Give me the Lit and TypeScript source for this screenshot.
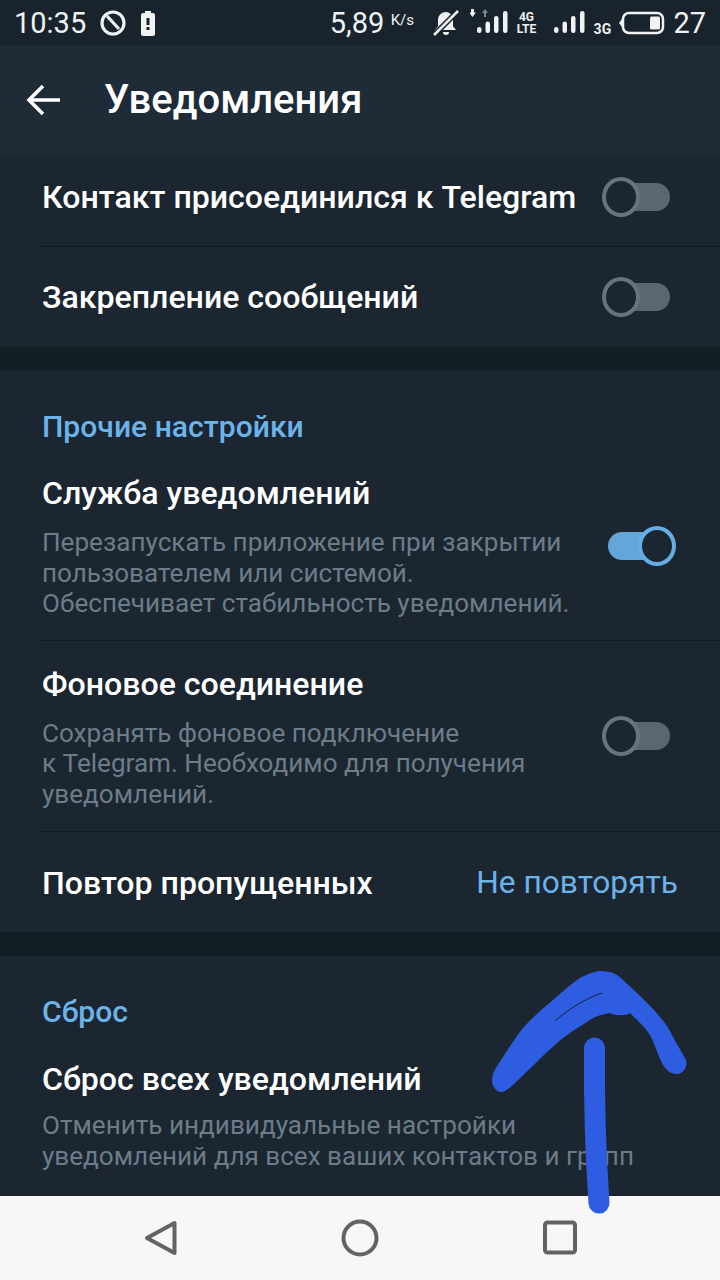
import { html, css, LitElement, svg } from "lit";
import { customElement } from "lit/decorators.js";

@customElement("app-root")
export class AppRoot extends LitElement {
  static styles = css`
    :host {
      display: flex;
      flex-direction: column;
      position: relative;
      width: 720px;
      height: 1280px;
      overflow: hidden;
      background: #121d24;
      font-family: Roboto, sans-serif;
      color: #fff;
    }

    .status {
      height: 46px;
      flex: none;
      background: #18232d;
      display: flex;
      align-items: center;
      padding: 0 14px;
      font-size: 29px;
      color: #f0f2f3;
    }
    .status svg { display: block; flex: none; }
    .status .time { width: 85px; }
    .status .block { width: 32px; margin-right: 10px; }
    .status .rate { margin-left: 175px; width: 57px; }
    .status .unit { font-size: 15px; width: 42px; margin-left: 4px; margin-bottom: 6px; }
    .status .tag {
      font-size: 12px;
      line-height: 12px;
      font-weight: 700;
      text-align: center;
    }
    .status .level { margin-left: 8px; }

    .bar {
      height: 110px;
      flex: none;
      background: #1f2c38;
      display: flex;
      align-items: center;
      padding: 0 0 3px 25px;
      box-sizing: border-box;
      font-size: 40px;
      font-weight: 500;
      gap: 43px;
    }

    .content {
      flex: 1;
      min-height: 0;
      overflow: hidden;
      display: flex;
      flex-direction: column;
    }

    .card { background: #1b2631; padding-left: 40px; }
    .card.last { flex: 1; }
    .gap { height: 24px; flex: none; }

    .row {
      display: flex;
      justify-content: space-between;
      align-items: center;
      box-sizing: border-box;
      font-size: 32.1px;
      font-weight: 500;
      padding: 0 50px 0 2px;
      border-bottom: 1px solid #101a22;
    }
    .row:last-child { border-bottom: none; }
    .first { height: 91px; padding-bottom: 8px; }
    .second { height: 100px; }
    .repeat { height: 100px; padding-top: 2px; }

    .head {
      color: #6cb3ea;
      font-size: 30.1px;
      font-weight: 500;
      height: 34px;
      line-height: 34px;
      padding-left: 2px;
    }

    .sub {
      display: flex;
      justify-content: space-between;
      padding: 25px 50px 21px 2px;
      border-bottom: 1px solid #101a22;
    }
    .sub.top { padding-top: 31px; }
    .sub.reset { padding-top: 32px; }
    .sub.plain { border: none; }
    .sub .title { font-size: 32.1px; font-weight: 500; line-height: 36px; }
    .sub .desc {
      font-size: 26.1px;
      line-height: 30.600px;
      color: #6c7c88;
      margin-top: 16px;
      white-space: nowrap;
    }
    .sub.reset .desc { margin-top: 13px; line-height: 31px; }
    .sub .side { margin-top: 50px; }
    .sub.top .side { margin-top: 51px; }

    .value { color: #6cb3ea; font-size: 31.7px; font-weight: 400; margin-right: -8px; }

    .switch { position: relative; width: 68px; height: 40px; flex: none; }
    .switch .track {
      position: absolute;
      left: 4px;
      right: 0;
      top: 6px;
      height: 28px;
      border-radius: 14px;
      background: #5a6671;
    }
    .switch .thumb {
      position: absolute;
      left: 0;
      top: 0;
      width: 38px;
      height: 40px;
      box-sizing: border-box;
      border: 4px solid #677480;
      border-radius: 50%;
      background: #1b2631;
    }
    .switch.on { margin-right: -6px; }
    .switch.on .track { background: #64a5da; left: 0; right: 4px; }
    .switch.on .thumb { left: auto; right: 0; border-color: #66ade3; }

    .nav {
      height: 84px;
      flex: none;
      background: #f6f7f6;
      display: flex;
      align-items: center;
      justify-content: center;
      gap: 140px;
    }
    .nav svg { display: block; }

    .scribble {
      position: absolute;
      left: 0;
      top: 0;
      pointer-events: none;
    }
  `;

  toggle(on = false) {
    return html`<div class="switch ${on ? "on" : ""}">
      <div class="track"></div>
      <div class="thumb"></div>
    </div>`;
  }

  signal(arrows: boolean) {
    const xs = [0, 8.5, 17, 26];
    const tops = [18, 12.5, 7, 2];
    const bars = xs.map(
      (x, i) => svg`<rect x=${x} y=${tops[i]} width="4.5" height=${24 - tops[i]} rx="2.2" fill="#f0f2f3" />`
    );
    return html`<svg
      width="38"
      height="26"
      viewBox="-7 0 38 26"
      style="margin-top:-2px"
    >
      ${bars}
      ${arrows
        ? svg`<path d="M-6 0h3v3.500h2L-4.500 8-8 3.500h2z" fill="#f0f2f3" />
            <path d="M7 8V4H5l3-4 3 4H9v4z" fill="#7b8790" />`
        : ""}
    </svg>`;
  }

  render() {
    return html`
      <div class="status">
        <span class="time">10:35</span>
        <svg class="block" width="32" height="28" viewBox="0 0 32 28" fill="none" stroke="#f0f2f3" stroke-width="3.200">
          <circle cx="14" cy="14" r="11" />
          <path d="M8 7l12 13" />
        </svg>
        <svg width="14" height="25" viewBox="0 0 14 25">
          <path d="M4 0h6v2h2a2 2 0 0 1 2 2v19a2 2 0 0 1-2 2H2a2 2 0 0 1-2-2V4a2 2 0 0 1 2-2h2z" fill="#f0f2f3" />
          <path d="M5.500 7h3v7h-3zM5.500 16h3v3h-3z" fill="#18232d" />
        </svg>
        <span class="rate">5,89</span>
        <span class="unit">K/s</span>
        <svg width="26" height="26" viewBox="0 0 26 26" fill="#f0f2f3">
          <path d="M13 2c-5 0-8 4-8 8v6l-3 4h21l-3-4v-6c0-4-3-8-7-8zM10 22a3 3 0 0 0 6 0z" />
          <path d="M25 1L1 25" stroke="#18232d" stroke-width="5.500" />
          <path d="M25 1L1 25" stroke="#f0f2f3" stroke-width="2.500" />
        </svg>
        <span style="width:11px"></span>
        ${this.signal(true)}
        <span class="tag" style="width:22px;margin:0 10px 0 8px">4G<br />LTE</span>
        ${this.signal(false)}
        <span class="tag" style="font-size:14px;margin:12px 6px 0 6px;width:22px">3G</span>
        <svg width="46" height="24" viewBox="0 0 46 24" fill="none">
          <rect x="4" y="2" width="40" height="20" rx="6" stroke="#f0f2f3" stroke-width="2.500" />
          <rect x="31" y="5.500" width="10" height="13" rx="1.500" fill="#f0f2f3" />
          <path d="M3 8L0 12l3 4z" fill="#f0f2f3" />
        </svg>
        <span class="level">27</span>
      </div>

      <div class="bar">
        <svg width="36" height="36" viewBox="0 0 36 36" fill="none" stroke="#fff" stroke-width="3.600">
          <path d="M35 18H5M18 4L4 18l14 14" />
        </svg>
        <span>Уведомления</span>
      </div>

      <div class="content">
        <div class="card">
          <div class="row first">Контакт присоединился к Telegram ${this.toggle()}</div>
          <div class="row second">Закрепление сообщений ${this.toggle()}</div>
        </div>
        <div class="gap"></div>
        <div class="card" style="padding-top:39px">
          <div class="head">Прочие настройки</div>
          <div class="sub top">
            <div>
              <div class="title">Служба уведомлений</div>
              <div class="desc">Перезапускать приложение при закрытии<br />пользователем или системой.<br />Обеспечивает стабильность уведомлений.</div>
            </div>
            <div class="side">${this.toggle(true)}</div>
          </div>
          <div class="sub">
            <div>
              <div class="title">Фоновое соединение</div>
              <div class="desc">Сохранять фоновое подключение<br />к Telegram. Необходимо для получения<br />уведомлений.</div>
            </div>
            <div class="side">${this.toggle()}</div>
          </div>
          <div class="row repeat">Повтор пропущенных <span class="value">Не повторять</span></div>
        </div>
        <div class="gap"></div>
        <div class="card last" style="padding-top:39px">
          <div class="head">Сброс</div>
          <div class="sub reset plain">
            <div>
              <div class="title">Сброс всех уведомлений</div>
              <div class="desc">Отменить индивидуальные настройки<br />уведомлений для всех ваших контактов и групп</div>
            </div>
          </div>
        </div>
      </div>

      <div class="nav">
        <svg width="60" height="44" viewBox="0 0 60 44" fill="none" stroke="#636363" stroke-width="4" stroke-linejoin="round">
          <path d="M44.500 7v30L17 22z" />
        </svg>
        <svg width="60" height="44" viewBox="0 0 60 44" fill="none" stroke="#636363" stroke-width="4">
          <circle cx="30" cy="22" r="16.500" />
        </svg>
        <svg width="60" height="44" viewBox="0 0 60 44" fill="none" stroke="#636363" stroke-width="4" stroke-linejoin="round">
          <rect x="15" y="6.500" width="30" height="30" rx="2.500" />
        </svg>
      </div>

      <svg class="scribble" width="720" height="1280" viewBox="0 0 720 1280" fill="none">
        <path
          d="M492 1080C492 1072 498 1065 503 1057C510 1046 516 1037 523 1028C532 1018 543 1008 553 1000C562 992 571 984 580 978C590 973 596 971 600 971C607 971 612 972 617 975C624 980 630 987 637 993C645 1001 653 1008 660 1017C666 1024 670 1030 673 1037L686 1060C688 1068 682 1074 677 1074C671 1074 667 1071 663 1065C658 1056 655 1044 650 1035C645 1027 637 1020 630 1013C626 1016 616 1016 610 1013C603 1014 595 1016 587 1022C577 1028 566 1035 557 1043C542 1056 528 1071 513 1085C507 1090 504 1092 501 1092C496 1092 492 1086 492 1080Z"
          fill="#2e5de2"
        />
        <path d="M555 1021C570 1008 585 999 602 993" stroke="#15222a" stroke-width="1" />
        <path d="M594.500 1048C594 1100 596 1160 599 1203" stroke="#2e5de2" stroke-width="21" stroke-linecap="round" />
      </svg>
    `;
  }
}
